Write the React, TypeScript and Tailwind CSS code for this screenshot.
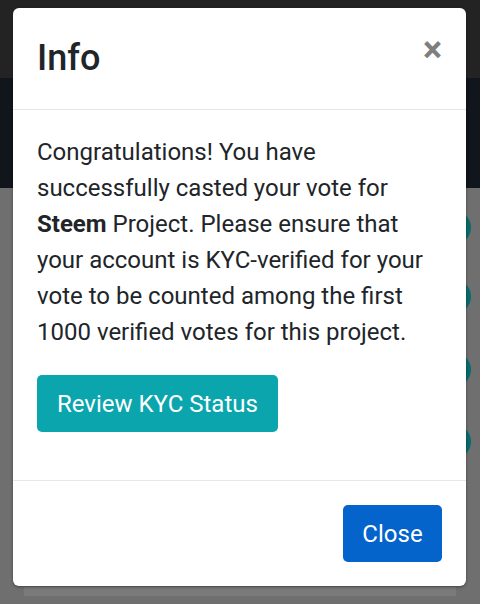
import React from "react";

export default function App() {
  return (
    <div
      className="relative w-[480px] h-[604px] overflow-hidden bg-[#6f6f6f]"
      style={{ fontFamily: "Roboto, 'Liberation Sans', sans-serif" }}
    >
      {/* page behind overlay */}
      <div className="flex flex-col h-full">
        <div className="h-[78px] bg-[#232323]" />
        <div className="h-[110px] bg-[#11161c]" />
        <div className="flex-1 bg-[#6f6f6f] flex flex-col items-center justify-end">
          <div className="w-[432px] h-[9px] bg-[#7a7a7a] mb-[8px]" />
        </div>
      </div>
      {/* teal circles peeking behind modal */}
      <div className="absolute left-[436px] top-[210px] w-[35px] h-[35px] rounded-full bg-[#0a6a6a]" />
      <div className="absolute left-[436px] top-[279px] w-[35px] h-[35px] rounded-full bg-[#0a6a6a]" />
      <div className="absolute left-[436px] top-[352px] w-[35px] h-[35px] rounded-full bg-[#0a6a6a]" />
      <div className="absolute left-[436px] top-[424px] w-[35px] h-[35px] rounded-full bg-[#0a6a6a]" />

      {/* modal */}
      <div className="absolute left-[13px] top-[8px] w-[453px] bg-white rounded-[6px] shadow-[0_1px_3px_rgba(0,0,0,0.4)] text-[#212529] flex flex-col">
        <div className="flex items-start justify-between px-[24px] py-[24px] border-b border-[#e5e7ea]">
          <h4 className="text-[36px] leading-[53px] font-medium m-0">Info</h4>
          <span className="text-[36px] leading-none font-bold text-[#7f7f7f] mt-0">×</span>
        </div>
        <div className="p-[24px]">
          <p className="text-[24px] leading-[36px] mb-[25px]">
            Congratulations! You have
            <br />
            successfully casted your vote for
            <br />
            <b className="font-bold">Steem</b> Project. Please ensure that
            <br />
            your account is KYC-verified for your
            <br />
            vote to be counted among the first
            <br />
            1000 verified votes for this project.
          </p>
          <button className="h-[57px] px-[20px] rounded-[5px] bg-[#0aa5ad] text-white text-[24px] mb-[24px]">
            Review KYC Status
          </button>
        </div>
        <div className="flex justify-end px-[24px] py-[24px] border-t border-[#e5e7ea]">
          <button className="h-[57px] w-[99px] rounded-[5px] bg-[#0563cc] text-white text-[24px]">
            Close
          </button>
        </div>
      </div>
    </div>
  );
}
